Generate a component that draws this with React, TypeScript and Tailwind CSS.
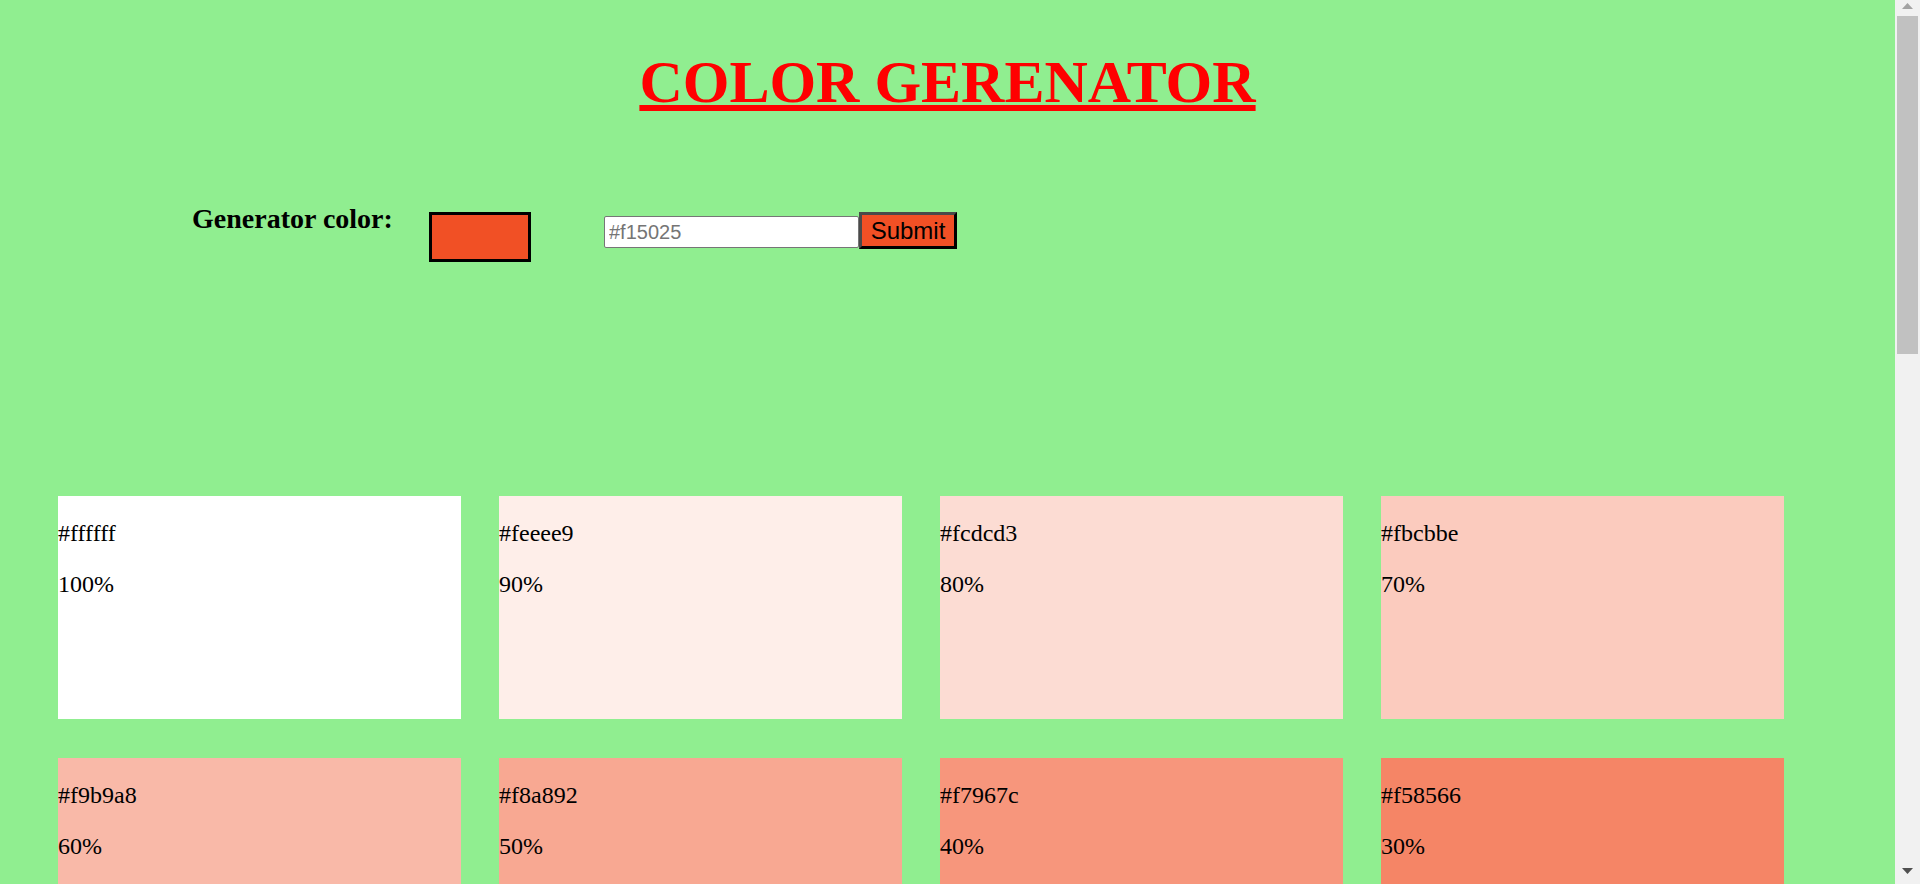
import { useState } from 'react';

type Swatch = { hex: string; weight: number; shade: boolean };

const base = [241, 80, 37];

// tints first (toward white), then the base, then shades (toward black)
const buildSwatches = (): Swatch[] => {
  const toHex = (rgb: number[]) => '#' + rgb.map((v) => Math.round(v).toString(16).padStart(2, '0')).join('');
  const list: Swatch[] = [];
  for (let p = 100; p >= 10; p -= 10) {
    list.push({ hex: toHex(base.map((c) => c + (255 - c) * (p / 100))), weight: p, shade: false });
  }
  list.push({ hex: toHex(base), weight: 0, shade: false });
  for (let p = 10; p <= 100; p += 10) {
    list.push({ hex: toHex(base.map((c) => c * (1 - p / 100))), weight: p, shade: true });
  }
  return list;
};

const SingleColor = ({ swatch, index }: { swatch: Swatch; index: number }) => {
  return (
    <article
      className={`h-[223px] ${index > 10 ? 'text-white' : 'text-black'}`}
      style={{ backgroundColor: swatch.hex }}
    >
      <p className="my-6 text-[24px] leading-[normal]">{swatch.hex}</p>
      <p className="my-6 text-[24px] leading-[normal]">{swatch.weight}%</p>
    </article>
  );
};

// the browser's classic scrollbar, as it shows in the screenshot
const Scrollbar = () => (
  <aside className="flex w-[25px] shrink-0 flex-col bg-[#f1f1f1]">
    <div className="flex h-[16px] justify-center pt-[3px]">
      <svg width="11" height="6" viewBox="0 0 11 6">
        <path d="M5.5 0 L11 6 L0 6 Z" fill="#a3a3a3" />
      </svg>
    </div>
    <div className="mx-[2px] h-[338px] bg-[#c1c1c1]"></div>
    <div className="flex-1"></div>
    <div className="flex h-[16px] justify-center">
      <svg width="11" height="6" viewBox="0 0 11 6">
        <path d="M0 0 L11 0 L5.5 6 Z" fill="#505050" />
      </svg>
    </div>
  </aside>
);

export default function App() {
  const [color, setColor] = useState('');
  const swatches = buildSwatches();

  return (
    <div className="flex h-screen overflow-hidden bg-[#90ee90] font-['Liberation_Serif','Times_New_Roman',serif] text-black">
      <main className="min-w-0 flex-1 overflow-hidden pb-16">
        <h1 className="pt-[48px] text-center text-[60px] leading-[normal] font-bold text-[#ff0000] underline decoration-[6px] underline-offset-[3px]">
          COLOR GERENATOR
        </h1>

        <section className="mt-[86px] flex items-start pl-[192px]">
          <h3 className="w-[237px] text-[28px] leading-[normal] font-bold">Generator color:</h3>
          <div className="mt-[9px] h-[50px] w-[102px] border-[3px] border-black bg-[#f15025]"></div>
          <form className="ml-[73px] flex items-start" onSubmit={(e) => e.preventDefault()}>
            <input
              type="text"
              value={color}
              onChange={(e) => setColor(e.target.value)}
              placeholder="#f15025"
              className="mt-[13px] h-[32px] w-[255px] rounded-[2px] border border-[#767676] bg-white px-[4px] font-['Liberation_Sans',Arial,sans-serif] text-[20px] text-black outline-none placeholder:text-[#757575]"
            />
            <button
              type="submit"
              className="mt-[9px] h-[37px] w-[98px] border-[3px] border-t-[#4a4a4a] border-r-black border-b-black border-l-[#4a4a4a] bg-[#f15025] font-['Liberation_Sans',Arial,sans-serif] text-[24px] leading-none text-black"
            >
              Submit
            </button>
          </form>
        </section>

        <section className="mt-[234px] grid grid-cols-[repeat(4,403px)] gap-x-[38px] gap-y-[39px] pl-[58px]">
          {swatches.map((swatch, index) => (
            <SingleColor key={index} swatch={swatch} index={index} />
          ))}
        </section>
      </main>
      <Scrollbar />
    </div>
  );
}
